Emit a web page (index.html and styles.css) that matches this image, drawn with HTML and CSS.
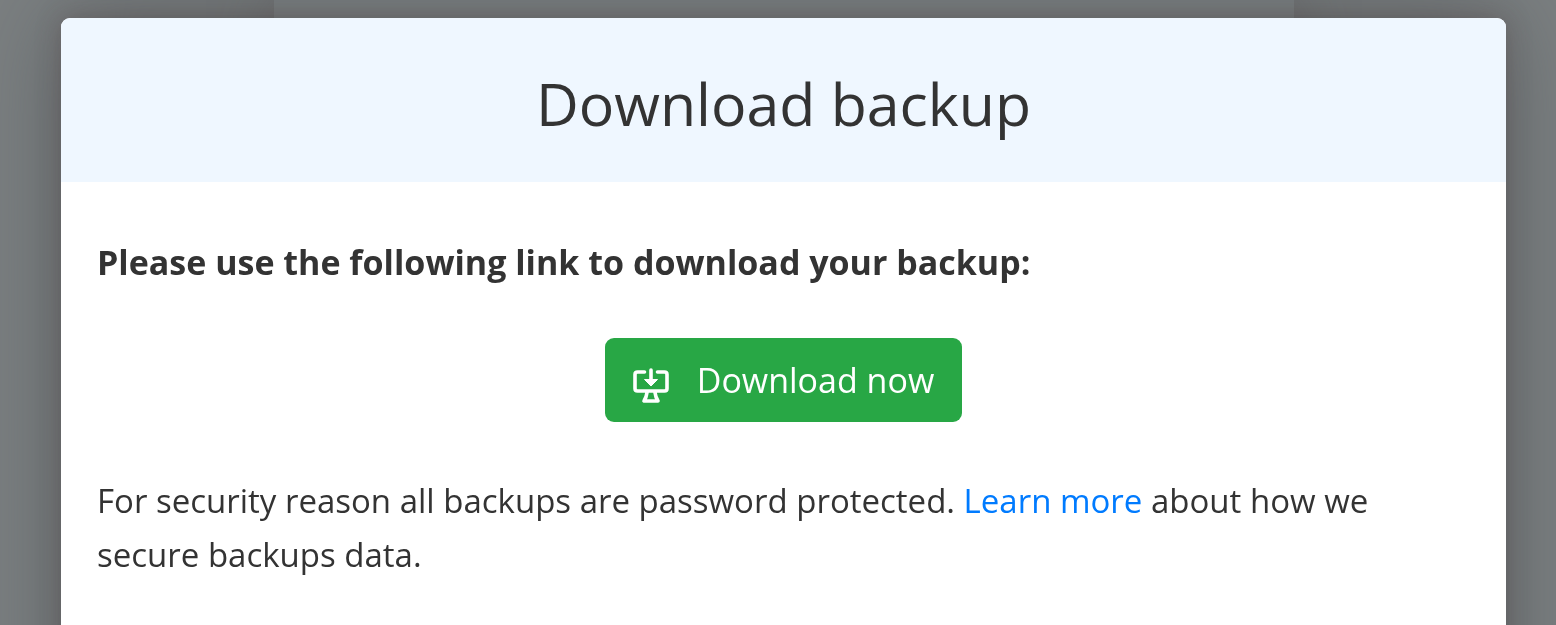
FILE: index.html
```html
<!DOCTYPE html>
<html lang="en">
<head>
<meta charset="utf-8">
<meta name="viewport" content="width=device-width, initial-scale=1">
<title>Download backup</title>
<link rel="stylesheet" href="styles.css">
</head>
<body class="page">
<div class="page-panel"></div>
<main class="dialog" role="dialog" aria-labelledby="dialog-title">
  <header class="dialog-header">
    <h1 class="dialog-title" id="dialog-title">Download backup</h1>
  </header>
  <div class="dialog-body">
    <p class="lead">Please use the following link to download your backup:</p>
    <div class="actions">
      <button class="download" type="button">
        <svg class="download-icon" viewBox="0 0 36 36" aria-hidden="true">
          <path class="icon-line" d="M11.500 4H4.500Q2 4 2 6.500V20.500Q2 23 4.500 23H31.500Q34 23 34 20.500V6.500Q34 4 31.500 4H24.500M18 2V12M14 24.500Q13.500 29 11 33H25Q22.500 29 22 24.500"/>
          <path class="icon-head" d="M11.500 11.500H24.500L18 18Z"/>
        </svg>
        <span>Download now</span>
      </button>
    </div>
    <p class="note">For security reason all backups are password protected. <a class="link" href="#learn-more">Learn more</a> about how we secure backups data.</p>
  </div>
</main>
</body>
</html>
```
FILE: styles.css
```css
* {
  box-sizing: border-box;
}

.page {
  position: relative;
  min-height: 100vh;
  margin: 0;
  padding: 18px 50px 0 61px;
  display: flex;
  background: #7b7f81;
  color: #333;
  font-family: "Segoe UI", "Open Sans", "Noto Sans", sans-serif;
  font-size: 34px;
  line-height: 54px;
}

/* Page card left visible behind the dialog */
.page-panel {
  position: absolute;
  inset: 0 262px 0 274px;
  background: #7f8486;
  box-shadow: 0 0 60px rgba(80, 70, 70, 0.4);
}

.dialog {
  position: relative;
  flex: 1;
  border-radius: 9px 9px 0 0;
  background: #fff;
}

/* Shadow that stays even down to the window's bottom edge */
.dialog::before {
  content: "";
  position: fixed;
  z-index: -1;
  inset: 18px 50px -100px 61px;
  border-radius: 9px;
  box-shadow: 0 0 24px rgba(80, 60, 60, 0.35), 0 0 90px rgba(60, 66, 68, 0.5);
}

.dialog {
  z-index: 1;
}

.dialog-header {
  padding: 39px 36px 33px;
  border-radius: 9px 9px 0 0;
  background: #eff7ff;
  text-align: center;
}

.dialog-title {
  margin: 0;
  font-size: 59px;
  font-weight: 400;
  line-height: 92px;
}

.dialog-body {
  padding: 53px 36px 36px;
}

.lead {
  margin: 0;
  font-weight: 700;
}

.actions {
  display: flex;
  justify-content: center;
  margin: 49px 0 52px;
}

.download {
  display: flex;
  align-items: center;
  gap: 28px;
  height: 84px;
  padding: 0 28px;
  border: 0;
  border-radius: 9px;
  background: #28a745;
  color: #fff;
  font: inherit;
  cursor: pointer;
}

.download-icon {
  width: 36px;
  height: 36px;
  margin-top: 12px;
}

.icon-line {
  fill: none;
  stroke: #fff;
  stroke-width: 3.6;
  stroke-linecap: round;
  stroke-linejoin: round;
}

.icon-head {
  fill: #fff;
  stroke: #fff;
  stroke-width: 1;
  stroke-linejoin: round;
}

.note {
  margin: 0;
  font-size: 33px;
}

.link {
  color: #007bff;
  text-decoration: none;
}
```
